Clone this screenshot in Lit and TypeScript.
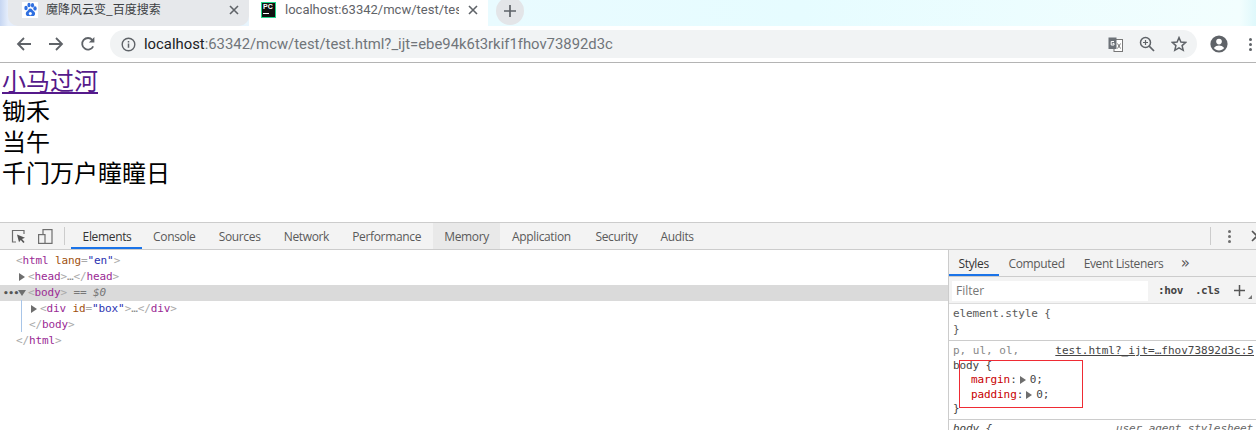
import { LitElement, html, css, svg } from "lit";
import { customElement } from "lit/decorators.js";

const closeX = svg`<svg class="ico" width="12" height="12" viewBox="0 0 12 12"><path d="M2 2l8 8M10 2l-8 8" stroke="#5f6368" stroke-width="1.6" fill="none"/></svg>`;
const open = (n: string) => html`<span class="br">&lt;</span><span class="tg">${n}</span>`;
const gt = html`<span class="br">&gt;</span>`;
const close = (n: string) => html`<span class="br">&lt;/</span><span class="tg">${n}</span><span class="br">&gt;</span>`;
const attr = (k: string, v: string) => html` <span class="at">${k}</span><span class="br">=</span><span class="vl">"${v}"</span>`;

@customElement("app-root")
class AppRoot extends LitElement {
  static styles = css`
    :host { display: block; width: 1256px; height: 430px; overflow: hidden; background: #fff; position: relative; font-family: "Open Sans", "Noto Sans", sans-serif; }
    .ico { display: block; flex: none; }
    .strip { height: 26px; display: flex; background: linear-gradient(90deg, #c6d6f2 0, #e6eefb 8px, #e9fbff 490px, #e6fcff 800px, #f2fefe 1240px, #dff8fb 1256px); }
    .gutter { width: 8px; flex: none; }
    .tab { width: 241px; flex: none; height: 26px; display: flex; align-items: center; box-sizing: border-box; }
    .tab.off { background: #e6e8eb; border-radius: 0 0 10px 10px; padding: 0 9px 6px 14px; }
    .tab.on { width: 239px; background: #fff; padding: 0 9px 6px 12px; }
    .tab .t { flex: 1; margin-left: 8px; padding-bottom: 3px; font-size: 12px; color: #3c4043; white-space: nowrap; overflow: hidden; font-family: "Noto Sans CJK SC", sans-serif; }
    .tab.on .t { margin-left: 9px; padding-bottom: 1px; font-family: Roboto, sans-serif; font-size: 13px; color: #5f6368; margin-right: 8px; }
    .fav { width: 16px; height: 16px; flex: none; background: #fff; }
    .pc { width: 15px; height: 16px; flex: none; background: #111; border: 1px solid #21d789; box-sizing: border-box; color: #fff; font: bold 7px/8px "Liberation Sans", sans-serif; padding-left: 1px; }
    .pc i { display: block; width: 6px; height: 1px; background: #fff; margin-top: 2px; }
    .plus { width: 28px; height: 28px; margin: -3px 0 0 8px; flex: none; border-radius: 50%; background: #e3e5e8; display: flex; align-items: center; justify-content: center; }
    .bar { height: 37px; box-sizing: border-box; display: flex; align-items: center; border-bottom: 1px solid #b4b4b4; background: #fff; padding-left: 8px; }
    .nav { width: 32px; flex: none; display: flex; justify-content: center; }
    .omni { width: 1087px; height: 28px; margin-left: 6px; border-radius: 14px; background: #f1f3f4; display: flex; align-items: center; box-sizing: border-box; padding-left: 11px; flex: none; }
    .url { flex: 1; margin-left: 8px; font: 14.85px Roboto, sans-serif; color: #70757a; white-space: nowrap; }
    .url b { font-weight: 400; color: #202124; }
    .endgap { width: 2px; flex: none; }
    .avatar { width: 44px; display: flex; justify-content: center; flex: none; }
    .kebab { flex: none; width: 4px; display: flex; flex-direction: column; gap: 2px; margin-left: 8px; }
    .kebab i { width: 3px; height: 3px; border-radius: 50%; background: #5f6368; display: block; }
    .page { height: 159px; box-sizing: border-box; padding: 1.6px 0 0 2px; font: 24px/30.67px "Noto Sans CJK SC", sans-serif; color: #000; }
    .page a { color: #551a8b; text-decoration: underline; display: block; }
    .line { display: block; }
    .dev { height: 208px; border-top: 1px solid #ccc; box-sizing: border-box; display: flex; flex-direction: column; font-size: 12px; color: #5a5a5a; }
    .tbar { height: 27px; box-sizing: border-box; flex: none; background: #f3f3f3; border-bottom: 1px solid #ccc; display: flex; align-items: stretch; }
    .tools { display: flex; align-items: center; gap: 12px; padding-left: 11px; width: 64px; flex: none; box-sizing: border-box; }
    .sep { width: 1px; height: 18px; background: #ccc; align-self: center; flex: none; }
    .dtabs { display: flex; margin-left: 6px; flex: 1; }
    .dtab { padding: 0 11.6px; display: flex; align-items: center; white-space: nowrap; height: 26px; box-sizing: border-box; letter-spacing: -0.35px; }
    .dtab.act { color: #333; border-bottom: 2px solid #1a73e8; padding-top: 2px; width: 70.5px; }
    .dtab.hov { background: #e9e9e9; }
    .dtab.app { padding-right: 13px; }
    .rtools { display: flex; align-items: center; flex: none; }
    .rk { margin: 0 0 0 17px; }
    .rk i { background: #6e6e6e; }
    .xclip { width: 5px; overflow: hidden; margin-left: 19px; flex: none; }
    .panes { flex: 1; display: flex; min-height: 0; }
    .tree { width: 948px; flex: none; padding-top: 3px; box-sizing: border-box; font: 11px/16px "DejaVu Sans Mono", monospace; position: relative; letter-spacing: -0.12px; }
    .row { height: 16px; display: flex; align-items: center; }
    .code { white-space: pre; color: #8a8a8a; }
    .row.sel { background: #dadada; }
    .br { color: #a9a9a9; }
    .tg { color: #9a2a94; }
    .at { color: #a0500f; }
    .vl { color: #2a30b0; }
    .ar { width: 0; height: 0; border-left: 6px solid #6e6e6e; border-top: 4px solid transparent; border-bottom: 4px solid transparent; flex: none; margin-right: 3px; }
    .ar.d { border-top: 6px solid #6e6e6e; border-left: 4px solid transparent; border-right: 4px solid transparent; border-bottom: 0; margin: 0 2px 0 1px; }
    .i16 { padding-left: 16px; }
    .i19 { padding-left: 19px; }
    .i31 { padding-left: 31px; }
    .i28 { padding-left: 29px; }
    .sel-in { display: flex; align-items: center; padding-left: 3px; }
    .dots { width: 14px; color: #555; font: bold 9px/16px "DejaVu Sans", sans-serif; letter-spacing: -0.5px; }
    .eq { color: #777; font-style: italic; }
    .guide { position: absolute; left: 21px; top: 50px; width: 1px; height: 32px; background: #a8c5e8; }
    .side { flex: 1; border-left: 1px solid #ccc; min-width: 0; display: flex; flex-direction: column; }
    .stabs { height: 27px; flex: none; box-sizing: border-box; background: #f3f3f3; border-bottom: 1px solid #ccc; display: flex; align-items: stretch; }
    .stab { padding: 0 9.5px; display: flex; align-items: center; height: 26px; box-sizing: border-box; white-space: nowrap; letter-spacing: -0.35px; }
    .stab.act { color: #333; border-bottom: 2px solid #1a73e8; padding-top: 2px; width: 50px; }
    .more { font: 15px "DejaVu Sans", sans-serif; color: #555; margin-left: 8px; display: flex; align-items: center; }
    .filter { height: 27px; flex: none; box-sizing: border-box; background: #f3f3f3; border-bottom: 1px solid #ddd; display: flex; align-items: center; padding: 1px 0 0 3px; position: relative; }
    .finput { width: 196px; height: 20px; background: #fff; padding-left: 4px; box-sizing: border-box; line-height: 20px; color: #777; flex: none; }
    .ftool { font: bold 11px "DejaVu Sans Mono", monospace; color: #444; letter-spacing: -0.4px; margin-left: 10px; }
    .ftool + .ftool { margin-left: 12px; }
    .fplus { margin-left: 14px; }
    .corner { position: absolute; right: 4px; bottom: 4px; width: 0; height: 0; border-bottom: 4px solid #777; border-left: 4px solid transparent; }
    .rules { font: 11px "DejaVu Sans Mono", monospace; color: #444; letter-spacing: -0.1px; position: relative; flex: 1; min-height: 0; overflow: hidden; }
    .rule { border-bottom: 1px solid #ccc; padding-left: 4px; box-sizing: border-box; }
    .rule.first { height: 37px; padding-top: 2px; line-height: 16px; color: #5a5a5a; }
    .rule.second { height: 79px; padding-top: 3px; line-height: 14.5px; }
    .gray { color: #888; letter-spacing: 0; }
    .srow { display: flex; justify-content: space-between; padding-right: 2px; }
    .src { color: #444; text-decoration: underline; letter-spacing: 0; }
    .prop { padding-left: 18px; display: flex; align-items: center; height: 14.5px; }
    .pn { color: #c80000; }
    .par { border-left: 6px solid #6e6e6e; border-top: 4px solid transparent; border-bottom: 4px solid transparent; width: 0; height: 0; margin: 0 4px 0 3px; }
    .ua { display: flex; justify-content: space-between; font-style: italic; padding: 1px 3px 0 4px; line-height: 15px; color: #444; }
    .ua .g { color: #666; }
    .redbox { position: absolute; left: 10px; top: 56px; width: 124px; height: 48px; border: 1px solid #ef2b34; box-sizing: border-box; }
  `;

  render() {
    return html`
      <div class="strip">
        <div class="gutter"></div>
        <div class="tab off">
          <svg class="fav" viewBox="0 0 16 16"><rect width="16" height="16" fill="#fff"/><g fill="#2f6fe0"><ellipse cx="4" cy="6" rx="1.7" ry="2.2"/><ellipse cx="7" cy="3" rx="1.6" ry="2.2"/><ellipse cx="10.5" cy="3.2" rx="1.6" ry="2.2"/><ellipse cx="13" cy="6.4" rx="1.7" ry="2.2"/><path d="M8.3 6.4c-1.7 0-2.2 2-3.5 3.1-1.5 1.2-1.4 4.4 1.2 4.6 1 .1 1.6-.4 2.4-.4s1.5.5 2.5.4c2.6-.2 2.7-3.3 1.2-4.6-1.3-1.1-2-3.1-3.8-3.1z"/></g><circle cx="8.3" cy="11.6" r="1.5" fill="#fff"/></svg>
          <span class="t">魔降风云变_百度搜索</span>
          ${closeX}
        </div>
        <div class="tab on">
          <div class="pc">PC<i></i></div>
          <span class="t">localhost:63342/mcw/test/test</span>
          ${closeX}
        </div>
        <div class="plus"><svg class="ico" width="12" height="12" viewBox="0 0 12 12"><path d="M6 0v12M0 6h12" stroke="#5f6368" stroke-width="1.7"/></svg></div>
      </div>
      <div class="bar">
        <div class="nav"><svg class="ico" width="16" height="16" viewBox="0 0 16 16"><path d="M15 8H2M8 2L2 8l6 6" stroke="#5f6368" stroke-width="1.8" fill="none"/></svg></div>
        <div class="nav"><svg class="ico" width="16" height="16" viewBox="0 0 16 16"><path d="M1 8h13M8 2l6 6-6 6" stroke="#5f6368" stroke-width="1.8" fill="none"/></svg></div>
        <div class="nav"><svg class="ico" width="16" height="16" viewBox="0 0 16 16"><path d="M13.2 10.4A5.8 5.8 0 1 1 12.4 4" stroke="#5f6368" stroke-width="1.8" fill="none"/><path d="M14.4 1v5.6H8.8z" fill="#5f6368"/></svg></div>
        <div class="omni">
          <svg class="ico" width="15" height="15" viewBox="0 0 15 15"><circle cx="7.5" cy="7.5" r="6.3" stroke="#5f6368" stroke-width="1.4" fill="none"/><path d="M7.5 6.6v4.2M7.5 3.9v1.5" stroke="#5f6368" stroke-width="1.5"/></svg>
          <span class="url"><b>localhost</b>:63342/mcw/test/test.html?_ijt=ebe94k6t3rkif1fhov73892d3c</span>
          <div class="nav"><svg class="ico" width="15" height="15" viewBox="0 0 15 15"><rect x="6" y="2.500" width="8.500" height="12" fill="#fff" stroke="#777"/><rect x="0.500" y="0.500" width="8" height="11.500" fill="#6d7278"/><path d="M6 4.500H3.200v3.500H6V6.400H4.600" stroke="#fff" fill="none"/><path d="M9.500 6.500l3 5M12.500 6.500l-3 5" stroke="#777"/></svg></div>
          <div class="nav"><svg class="ico" width="16" height="16" viewBox="0 0 16 16"><circle cx="6.500" cy="6.500" r="5" stroke="#5f6368" stroke-width="1.500" fill="none"/><path d="M10.200 10.200L15 15" stroke="#5f6368" stroke-width="1.700"/><path d="M6.500 4v5M4 6.500h5" stroke="#5f6368" stroke-width="1.200"/></svg></div>
          <div class="nav"><svg class="ico" width="16" height="16" viewBox="0 0 16 16"><path d="M8 1.600l1.900 4.400 4.800.4-3.600 3.200 1.100 4.700L8 11.800l-4.200 2.500 1.100-4.700-3.600-3.200 4.800-.4z" stroke="#5f6368" stroke-width="1.500" fill="none"/></svg></div>
          <div class="endgap"></div>
        </div>
        <div class="avatar"><svg class="ico" width="18" height="18" viewBox="0 0 18 18"><circle cx="9" cy="9" r="8.600" fill="#5f6368"/><circle cx="9" cy="6.600" r="2.800" fill="#fff"/><path d="M3.800 13c1.200-1.900 3.400-2.600 5.200-2.600s4 .7 5.200 2.600c-1.300 1.500-3.100 2.400-5.200 2.400S5.100 14.500 3.800 13z" fill="#fff"/></svg></div>
        <div class="kebab"><i></i><i></i><i></i></div>
      </div>
      <div class="page">
        <a href="#">小马过河</a>
        <span class="line">锄禾</span>
        <span class="line">当午</span>
        <span class="line">千门万户瞳瞳日</span>
      </div>
      <div class="dev">
        <div class="tbar">
          <div class="tools">
            <svg class="ico" width="15" height="15" viewBox="0 0 15 15"><path d="M5 13H1.500V1.500H13V5" stroke="#6e6e6e" stroke-width="1.200" fill="none"/><path d="M6 5.500l8 3.200-3 1.300 2.600 3-1.300 1-2.500-3-1.800 2.300z" fill="#555"/></svg>
            <svg class="ico" width="15" height="15" viewBox="0 0 15 15"><rect x="5" y="0.600" width="9" height="13.800" fill="none" stroke="#6e6e6e" stroke-width="1.200"/><rect x="0.600" y="5.600" width="6.400" height="8.800" fill="#f3f3f3" stroke="#6e6e6e" stroke-width="1.200"/></svg>
          </div>
          <div class="sep"></div>
          <div class="dtabs">
            <div class="dtab act">Elements</div>
            <div class="dtab">Console</div>
            <div class="dtab">Sources</div>
            <div class="dtab">Network</div>
            <div class="dtab">Performance</div>
            <div class="dtab hov">Memory</div>
            <div class="dtab app">Application</div>
            <div class="dtab">Security</div>
            <div class="dtab">Audits</div>
          </div>
          <div class="rtools">
            <div class="sep"></div>
            <div class="kebab rk"><i></i><i></i><i></i></div>
            <div class="xclip"><svg class="ico" width="12" height="12" viewBox="0 0 12 12"><path d="M1 1l10 10M11 1L1 11" stroke="#555" stroke-width="1.600"/></svg></div>
          </div>
        </div>
        <div class="panes">
          <div class="tree">
            <div class="row i16"><span class="code">${open("html")}${attr("lang", "en")}${gt}</span></div>
            <div class="row i19"><span class="ar"></span><span class="code">${open("head")}${gt}…${close("head")}</span></div>
            <div class="row sel"><div class="sel-in"><span class="dots">•••</span><span class="ar d"></span><span class="code">${open("body")}${gt}<span class="eq"> == $0</span></span></div></div>
            <div class="row i31"><span class="ar"></span><span class="code">${open("div")}${attr("id", "box")}${gt}…${close("div")}</span></div>
            <div class="row i28"><span class="code">${close("body")}</span></div>
            <div class="row i16"><span class="code">${close("html")}</span></div>
            <div class="guide"></div>
          </div>
          <div class="side">
            <div class="stabs">
              <div class="stab act">Styles</div>
              <div class="stab">Computed</div>
              <div class="stab">Event Listeners</div>
              <div class="more">»</div>
            </div>
            <div class="filter">
              <div class="finput">Filter</div>
              <span class="ftool">:hov</span><span class="ftool">.cls</span>
              <svg class="ico fplus" width="11" height="11" viewBox="0 0 11 11"><path d="M5.500 0v11M0 5.500h11" stroke="#555" stroke-width="1.500"/></svg>
              <div class="corner"></div>
            </div>
            <div class="rules">
              <div class="rule first"><div>element.style {</div><div>}</div></div>
              <div class="rule second">
                <div class="srow"><span class="gray">p, ul, ol,</span><span class="src">test.html?_ijt=…fhov73892d3c:5</span></div>
                <div>body {</div>
                <div class="prop"><span class="pn">margin</span>:<span class="par"></span>0;</div>
                <div class="prop"><span class="pn">padding</span>:<span class="par"></span>0;</div>
                <div>}</div>
              </div>
              <div class="ua"><span>body {</span><span class="g">user agent stylesheet</span></div>
              <div class="redbox"></div>
            </div>
          </div>
        </div>
      </div>
    `;
  }
}
